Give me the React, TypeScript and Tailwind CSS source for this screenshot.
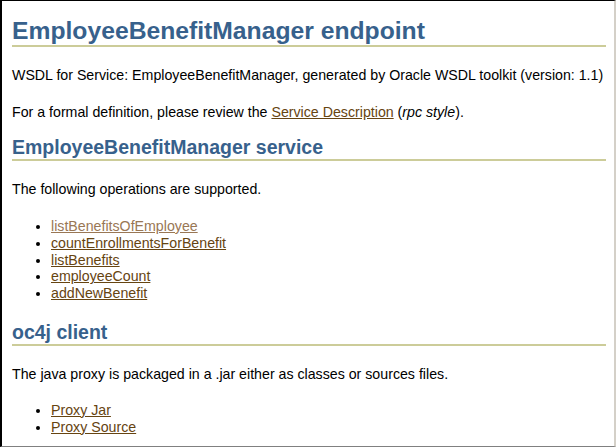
export default function App() {
  const ops = [
    { name: 'listBenefitsOfEmployee', visited: true },
    { name: 'countEnrollmentsForBenefit', visited: false },
    { name: 'listBenefits', visited: false },
    { name: 'employeeCount', visited: false },
    { name: 'addNewBenefit', visited: false },
  ];

  return (
    <div className="h-[447px] w-[616px] overflow-hidden bg-white border-t border-l-2 border-r-2 border-b border-t-black border-l-black border-r-[#d4d0c8] border-b-[#808080] pl-[10px] pr-[8px] font-['Liberation_Sans',Arial,sans-serif] text-[14.2px] leading-[15px] text-black">
      <h1 className="mt-[16px] border-b-2 border-[#cccc99] text-[24.7px] leading-[28px] font-bold text-[#37618c]">
        EmployeeBenefitManager endpoint
      </h1>
      <p className="mt-[21px] whitespace-nowrap">
        WSDL for Service: EmployeeBenefitManager, generated by Oracle WSDL toolkit (version: 1.1)
      </p>
      <p className="mt-[22px]">
        For a formal definition, please review the{' '}
        <a href="#" className="text-[#664411] underline">Service Description</a> (<i>rpc style</i>).
      </p>

      <h2 className="mt-[17px] pb-[1px] border-b-2 border-[#cccc99] text-[19.5px] leading-[21px] font-bold text-[#37618c]">
        EmployeeBenefitManager service
      </h2>
      <p className="mt-[21px]">The following operations are supported.</p>
      <ul className="mt-[21px] list-disc pl-[39px] leading-[16.75px]">
        {ops.map((op) => (
          <li key={op.name}>
            <a href="#" className={op.visited ? 'text-[#997755] underline' : 'text-[#664411] underline'}>
              {op.name}
            </a>
          </li>
        ))}
      </ul>

      <h2 className="mt-[20px] pb-[1px] border-b-2 border-[#cccc99] text-[19.5px] leading-[21px] font-bold text-[#37618c]">
        oc4j client
      </h2>
      <p className="mt-[21px]">The java proxy is packaged in a .jar either as classes or sources files.</p>
      <ul className="mt-[20px] list-disc pl-[39px] leading-[17px]">
        <li>
          <a href="#" className="text-[#664411] underline">Proxy Jar</a>
        </li>
        <li>
          <a href="#" className="text-[#664411] underline">Proxy Source</a>
        </li>
      </ul>
    </div>
  );
}
